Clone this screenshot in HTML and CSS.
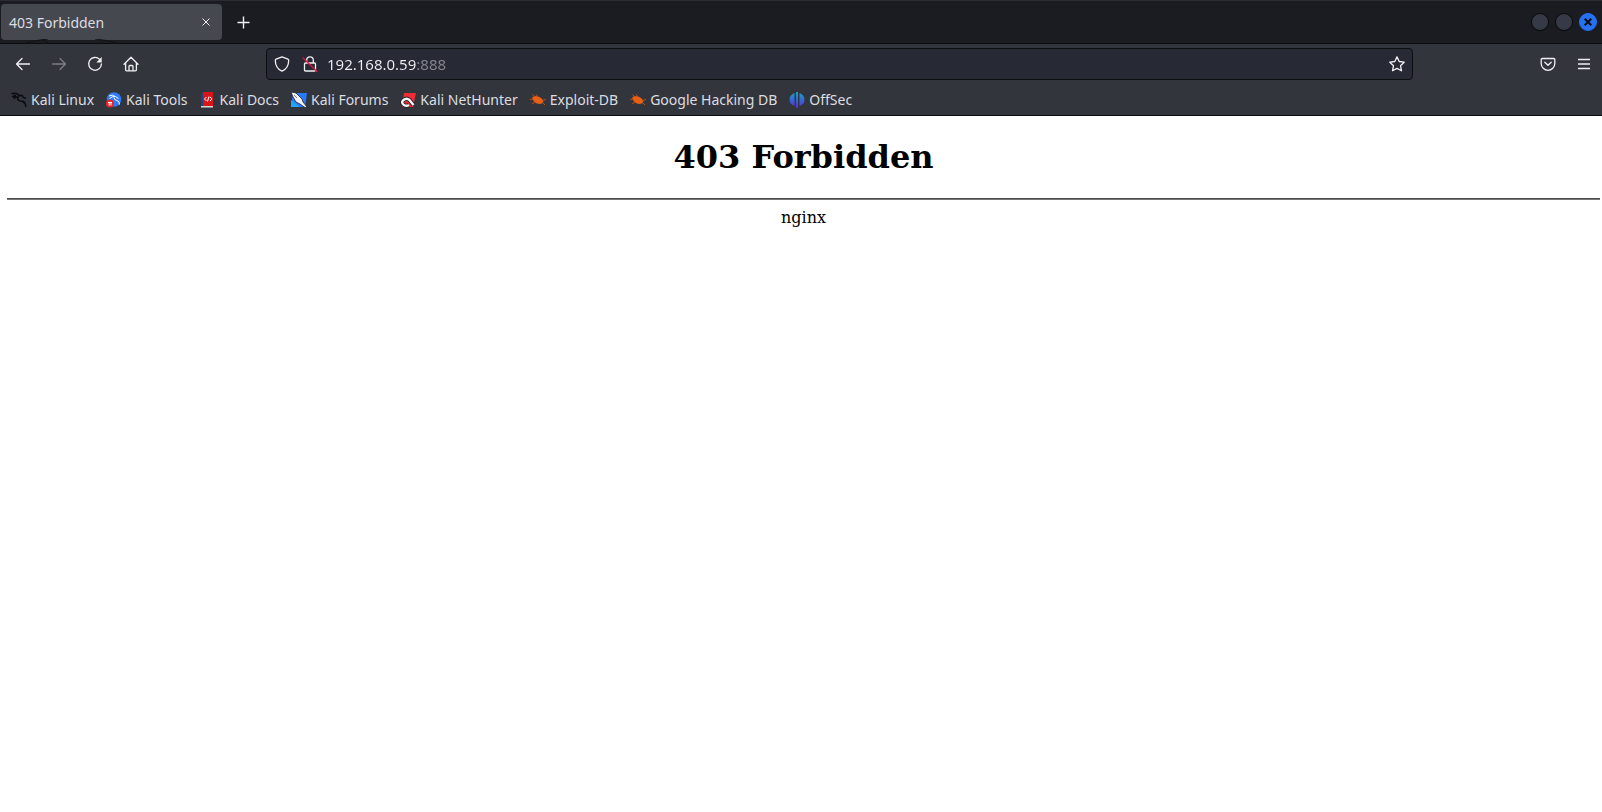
FILE: index.html
```html
<!DOCTYPE html>
<html lang="en">
<head>
    <meta charset="UTF-8">
    <meta name="viewport" content="width=device-width, initial-scale=1.0">
    <title>403 Forbidden</title>
    <link rel="stylesheet" href="styles.css">
</head>
<body>

<!-- Tabs -->
<header class="tab-bar">
    <svg class="watermark" viewBox="0 0 130 4"><path d="M26 4Q36 1 48 0M42 0l6 4M95 0q12 1 22 4" /></svg>
    <div class="tab">
        <span class="tab-title">403 Forbidden</span>
        <button class="tab-close" aria-label="Close tab">
            <svg width="8" height="8" viewBox="0 0 8 8"><path d="M.5.5l7 7M7.5.5l-7 7" /></svg>
        </button>
    </div>
    <button class="new-tab" aria-label="New tab">
        <svg width="13" height="13" viewBox="0 0 13 13"><path d="M6.5.5v12M.5 6.5h12" /></svg>
    </button>
    <div class="window-buttons">
        <button class="win-btn" aria-label="Minimize"></button>
        <button class="win-btn" aria-label="Maximize"></button>
        <button class="win-btn win-close" aria-label="Close">
            <svg width="8" height="8" viewBox="0 0 8 8"><path d="M.7.7l6.6 6.6M7.3.7L.7 7.3" /></svg>
        </button>
    </div>
</header>

<!-- Navigation -->
<nav class="nav-bar">
    <div class="nav-buttons">
        <button class="nav-btn" aria-label="Back">
            <svg class="icon" viewBox="0 0 16 16"><path d="M14.5 8H1.5M7 2.5L1.5 8 7 13.5" /></svg>
        </button>
        <button class="nav-btn" aria-label="Forward" disabled>
            <svg class="icon" viewBox="0 0 16 16"><path d="M1.5 8h13M9 2.5L14.5 8 9 13.5" /></svg>
        </button>
        <button class="nav-btn" aria-label="Reload">
            <svg class="icon" viewBox="0 0 16 16"><path d="M12.6 3.4A6.4 6.4 0 1 0 14.4 8" /><path class="solid" d="M14.7 1v5.4H9.3z" /></svg>
        </button>
        <button class="nav-btn" aria-label="Home">
            <svg class="icon" viewBox="0 0 16 16"><path d="M1 8.2L8 1.3l7 6.9M2.6 7v6.8c0 .6.4 1 1 1h8.8c.6 0 1-.4 1-1V7M6 14.8v-4.3c0-.6.4-1 1-1h2c.6 0 1 .4 1 1v4.3" /></svg>
        </button>
    </div>
    <div class="url-bar">
        <button class="url-icon" aria-label="Tracking protection">
            <svg class="icon" viewBox="0 0 16 16"><path d="M8 .9l5.9 2.2c.5.2.8.6.8 1.1 0 4.8-1.4 8.6-6.7 11-5.3-2.4-6.7-6.2-6.7-11 0-.5.3-.9.8-1.1z" /></svg>
        </button>
        <button class="url-icon" aria-label="Connection not secure">
            <svg class="icon" viewBox="0 0 16 16"><path d="M4.7 7V4.2a3.3 3.3 0 0 1 6.6 0V7M3.5 7h9c.6 0 1 .4 1 1v6c0 .6-.4 1-1 1h-9c-.6 0-1-.4-1-1V8c0-.6.4-1 1-1z" /><path class="slash" d="M1 2l14 13.5" /></svg>
        </button>
        <input class="url-input" type="text" value="192.168.0.59:888" aria-label="Address" spellcheck="false">
        <button class="url-icon" aria-label="Bookmark this page">
            <svg class="icon" viewBox="0 0 16 16"><path d="M8 .9l2.2 4.6 5 .7-3.7 3.5 1 5.1L8 12.4l-4.5 2.4 1-5.1L.8 6.2l5-.7z" /></svg>
        </button>
    </div>
    <div class="nav-tools">
        <button class="nav-btn" aria-label="Save to Pocket">
            <svg class="icon" viewBox="0 0 16 16"><path d="M2.2 2.5h11.6c.6 0 1 .4 1 1v4a6.8 6.8 0 0 1-13.6 0v-4c0-.6.4-1 1-1zM4.8 6.2L8 9.3l3.2-3.1" /></svg>
        </button>
        <button class="nav-btn" aria-label="Menu">
            <svg class="icon" viewBox="0 0 16 16"><path d="M2.5 3.5h11M2.5 8h11M2.5 12.5h11" /></svg>
        </button>
    </div>
</nav>

<!-- Bookmarks -->
<nav class="bookmarks">
    <a class="bookmark" href="#">
        <svg class="favicon" viewBox="0 0 16 16"><path class="dragon" d="M.5 1.5h5l3 2M1 4.8l4-1.3M2.5 6.5L6 4.5M7 3.5h4l1.500 2 2.500 1M8 4Q5.500 6 7.500 8.300q2 1 4 1 3 .7 3.300 5.700M12 9.500l2.500 3" /></svg>
        Kali Linux
    </a>
    <a class="bookmark" href="#">
        <svg class="favicon" viewBox="0 0 16 16"><circle cx="8" cy="7.5" r="7.3" fill="#2f7bf6" /><path class="tail" d="M3 4q4-2 6 .5M3.5 6.5q3-2.5 6-2l3 2M8 5.5q0 2.5 3 3 2.5.5 2.5 4" /><circle cx="4" cy="11.5" r="4" fill="#e8262c" /><path class="tail" d="M2 10.5h4M3.2 10.5v3M5 10.5v3" /></svg>
        Kali Tools
    </a>
    <a class="bookmark" href="#">
        <svg class="favicon" viewBox="0 0 16 16"><path d="M1 1h2.5v13H1z" fill="#1f3f87" /><path d="M3 0h10v14H3z" fill="#d81518" /><path d="M1 14h12v1.5H1z" fill="#d8d8d8" /><path class="code" d="M6.5 5L4.5 7l2 2M10 5l2 2-2 2M9 4.500L7.500 9.500" /></svg>
        Kali Docs
    </a>
    <a class="bookmark" href="#">
        <svg class="favicon" viewBox="0 0 16 16"><path d="M2 1h14l-2 14H0z" fill="#2777ff" /><path d="M0 8l9 7H0z" fill="#23a5f5" /><path d="M0 0l5 1 6 6 1 3 4 5-2 .5L9 12l-4-2-3-5z" fill="#f2f2f2" stroke="#22242a" stroke-width=".8" /><path d="M3 3l3 3" stroke="#666" stroke-width=".8" /></svg>
        Kali Forums
    </a>
    <a class="bookmark" href="#">
        <svg class="favicon" viewBox="0 0 16 16"><path d="M4 1h12l-3 14H2z" fill="#ef2b35" /><path d="M13.5 13L9.500 8Q6.500 5.500 3.500 8t.5 5q2.500 1.500 5 0" fill="none" stroke="#202126" stroke-width="4.2" /><path d="M13.500 13L9.500 8Q6.500 5.500 3.500 8t.5 5q2.500 1.500 5 0" fill="none" stroke="#f5f5f5" stroke-width="2.4" /></svg>
        Kali NetHunter
    </a>
    <a class="bookmark" href="#">
        <svg class="favicon" viewBox="0 0 16 16"><path class="bug" d="M2 6q2-3 6-1.500 4 1 5.500 5L12 11.500q-5 1.500-8-2z" /><path class="legs" d="M5 5L2.500 2.500M8 5L6 2.300M3 7L0 7.500M5 10l-3 2M12 8.500l4-1M12 10l3 3" /></svg>
        Exploit-DB
    </a>
    <a class="bookmark" href="#">
        <svg class="favicon" viewBox="0 0 16 16"><path class="bug" d="M2 6q2-3 6-1.500 4 1 5.500 5L12 11.500q-5 1.500-8-2z" /><path class="legs" d="M5 5L2.500 2.500M8 5L6 2.300M3 7L0 7.500M5 10l-3 2M12 8.500l4-1M12 10l3 3" /></svg>
        Google Hacking DB
    </a>
    <a class="bookmark" href="#">
        <svg class="favicon" viewBox="0 0 16 16">
            <defs><linearGradient id="offsec" x1="0" y1="0" x2="0" y2="1"><stop offset="0" stop-color="#13a5c8" /><stop offset="1" stop-color="#5a2be0" /></linearGradient></defs>
            <path d="M5.500 1v13Q.5 12 .5 7.500T5.500 1zM7 0h2v16H7zM10.500 1q5 2 5 6.500t-5 6.500z" fill="url(#offsec)" />
        </svg>
        OffSec
    </a>
</nav>

<!-- Page -->
<main class="page">
    <h1>403 Forbidden</h1>
    <hr>
    <p>nginx</p>
</main>

</body>
</html>
```
FILE: styles.css
```css
body {
    margin: 0;
    background: #fff;
    font-family: "Noto Sans", sans-serif;
    font-size: 14px;
    color: #f0f0f3;
}

button {
    display: flex;
    align-items: center;
    justify-content: center;
    padding: 0;
    border: none;
    background: none;
    color: inherit;
}

svg {
    display: block;
    fill: none;
    stroke: currentColor;
}

/* Tabs */
.tab-bar {
    position: relative;
    display: flex;
    align-items: center;
    height: 42px;
    padding: 0 5px 0 1px;
    background: #1b1c21;
    border-top: 1px solid #2b2c33;
    border-bottom: 1px solid #0c0d10;
}

.watermark {
    position: absolute;
    left: 0;
    bottom: 0;
    width: 130px;
    height: 4px;
    color: #111216;
}

.tab {
    display: flex;
    align-items: center;
    justify-content: space-between;
    box-sizing: border-box;
    width: 221px;
    height: 36px;
    padding: 0 8px;
    background: #46484f;
    border-radius: 4px;
}

.tab-title {
    color: #dcdde0;
}

.tab-close {
    width: 16px;
    height: 16px;
}

.new-tab {
    width: 35px;
    height: 35px;
    margin-left: 4px;
}

.new-tab svg {
    stroke-width: 1.4;
}

.window-buttons {
    display: flex;
    gap: 6px;
    margin-left: auto;
}

.win-btn {
    box-sizing: border-box;
    width: 18px;
    height: 18px;
    background: #363a47;
    border: 1px solid #08090b;
    border-radius: 50%;
}

.win-close {
    background: #2670f2;
    border-color: #2670f2;
    color: #0d0e12;
}

.win-close svg {
    stroke-width: 2;
}

/* Navigation */
.nav-bar {
    display: flex;
    align-items: center;
    height: 40px;
    background: #33353d;
}

.nav-buttons {
    display: flex;
    flex: 0 0 266px;
    box-sizing: border-box;
    padding-left: 5px;
}

.nav-btn {
    width: 36px;
    height: 36px;
}

.nav-btn:disabled {
    color: #7d7e84;
}

.icon {
    width: 16px;
    height: 16px;
    stroke-width: 1.3;
    stroke-linejoin: round;
    stroke-linecap: round;
}

.solid {
    fill: currentColor;
    stroke: none;
}

.slash {
    stroke: #e2143c;
}

.url-bar {
    display: flex;
    flex: 1;
    align-items: center;
    box-sizing: border-box;
    height: 32px;
    padding: 0 1px;
    background: #272935;
    border: 1px solid #0d0e12;
    border-radius: 4px;
}

.url-icon {
    width: 28px;
    height: 28px;
}

/* the port is dimmed after the host name */
.url-input {
    flex: 1;
    min-width: 0;
    padding: 0 3px;
    border: none;
    outline: none;
    background: linear-gradient(to right, #f0f0f3 92px, #85868e 92px);
    background-clip: text;
    -webkit-background-clip: text;
    -webkit-text-fill-color: transparent;
    font-family: inherit;
    font-size: 15px;
}

.nav-tools {
    display: flex;
    flex: 0 0 189px;
    justify-content: flex-end;
}

/* Bookmarks */
.bookmarks {
    display: flex;
    gap: 12px;
    height: 31px;
    padding-left: 11px;
    background: #33353d;
    border-bottom: 1px solid #0c0d10;
}

.bookmark {
    display: flex;
    align-items: center;
    gap: 4px;
    color: #dcdde0;
    text-decoration: none;
    white-space: nowrap;
}

.favicon {
    width: 16px;
    height: 16px;
    stroke: none;
}

.dragon {
    stroke: #0b0b0d;
    stroke-width: 1.5;
}

.tail,
.code {
    stroke: #fff;
    stroke-width: 1;
}

.bug {
    fill: #e95f14;
}

.legs {
    stroke: #b9501b;
    stroke-width: 1;
}

/* Page */
.page {
    padding: 0 2px 0 7px;
    color: #000;
    font-family: "DejaVu Serif", serif;
    font-size: 16px;
    text-align: center;
}

.page h1 {
    margin: 0;
    padding: 22px 0;
    font-size: 32px;
}

.page hr {
    margin: 0 0 8px;
    border: 1px solid;
    border-color: #4c4c4c #777 #777 #4c4c4c;
    border-width: 1px 0;
}

.page p {
    margin: 0;
}
```
